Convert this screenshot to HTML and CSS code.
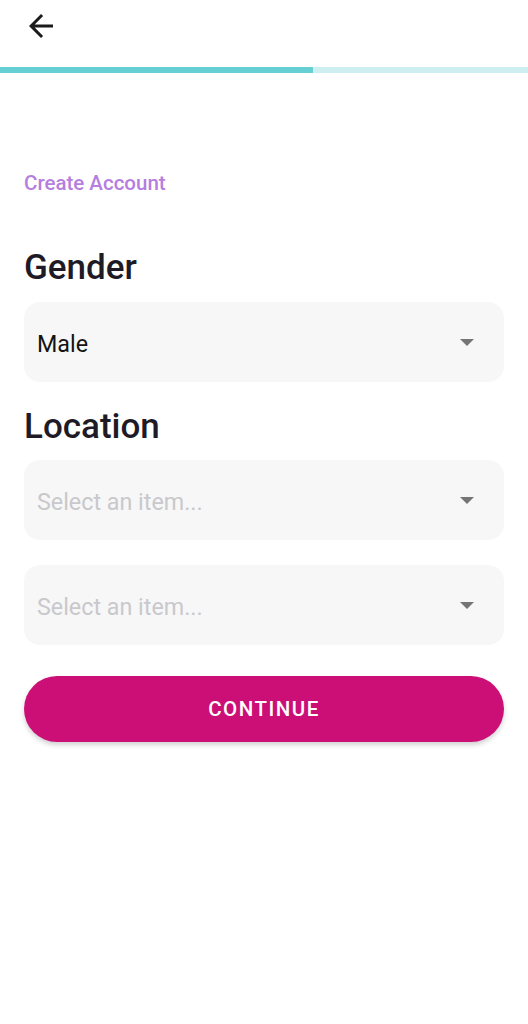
FILE: index.html
```html
<!DOCTYPE html>
<html>
<head>
<meta charset="utf-8">
<link rel="stylesheet" href="styles.css">
</head>
<body>
<div class="screen">
  <header class="topbar">
    <button class="back" aria-label="Back">
      <svg viewBox="0 0 24 24" width="36" height="36"><path d="M20 11H7.83l5.59-5.59L12 4l-8 8 8 8 1.41-1.41L7.83 13H20v-2z" fill="#1b1b1b"/></svg>
    </button>
  </header>
  <div class="progress"><div class="progress-fill" style="width:313px"></div></div>
  <main class="content">
    <p class="eyebrow">Create Account</p>
    <h2 class="label label-gender">Gender</h2>
    <div class="select">
      <span class="value">Male</span>
      <span class="caret"></span>
    </div>
    <h2 class="label label-location">Location</h2>
    <div class="select">
      <span class="value placeholder">Select an item...</span>
      <span class="caret"></span>
    </div>
    <div class="select select-gap">
      <span class="value placeholder">Select an item...</span>
      <span class="caret"></span>
    </div>
    <button class="continue">CONTINUE</button>
  </main>
</div>
</body>
</html>
```
FILE: styles.css
```css
* { box-sizing: border-box; }
html, body { margin: 0; padding: 0; background: #ffffff; }
body { font-family: Roboto, "Noto Sans", "Liberation Sans", sans-serif; }
.screen { width: 528px; min-height: 1024px; background: #fff; }
.topbar { height: 67px; padding: 8px 0 0 23px; }
.back { display: block; width: 36px; height: 36px; padding: 0; border: 0; background: none; }
.back svg { display: block; }
.progress { height: 6px; background: #cdeff2; }
.progress-fill { height: 100%; background: #66cfd4; }
.content { padding: 98px 24px 0 24px; display: flex; flex-direction: column; }
.eyebrow { margin: 0; font-size: 20.5px; line-height: 24px; font-weight: 500; color: #b57ee0; }
.label { margin: 0; font-size: 35px; line-height: 40px; font-weight: 500; color: #1e1b26; }
.label-gender { margin-top: 53px; margin-bottom: 14px; }
.label-location { margin-top: 25px; margin-bottom: 13px; }
.select { height: 80px; border-radius: 16px; background: #f7f7f7; display: flex; align-items: center; justify-content: space-between; padding: 0 30px 0 13px; }
.select-gap { margin-top: 25px; }
.value { font-size: 23.3px; color: #141414; margin-top: 3px; }
.placeholder { color: #c9c8cc; }
.caret { width: 0; height: 0; border-left: 7px solid transparent; border-right: 7px solid transparent; border-top: 7px solid #757575; }
.continue { margin-top: 31px; height: 66px; width: 100%; border: 0; border-radius: 33px; background: #cc0f76; color: #fff; font-family: Roboto, "Noto Sans", "Liberation Sans", sans-serif; font-size: 20.5px; font-weight: 500; letter-spacing: 1.5px; box-shadow: 0 3px 5px rgba(0,0,0,0.18); }
```
